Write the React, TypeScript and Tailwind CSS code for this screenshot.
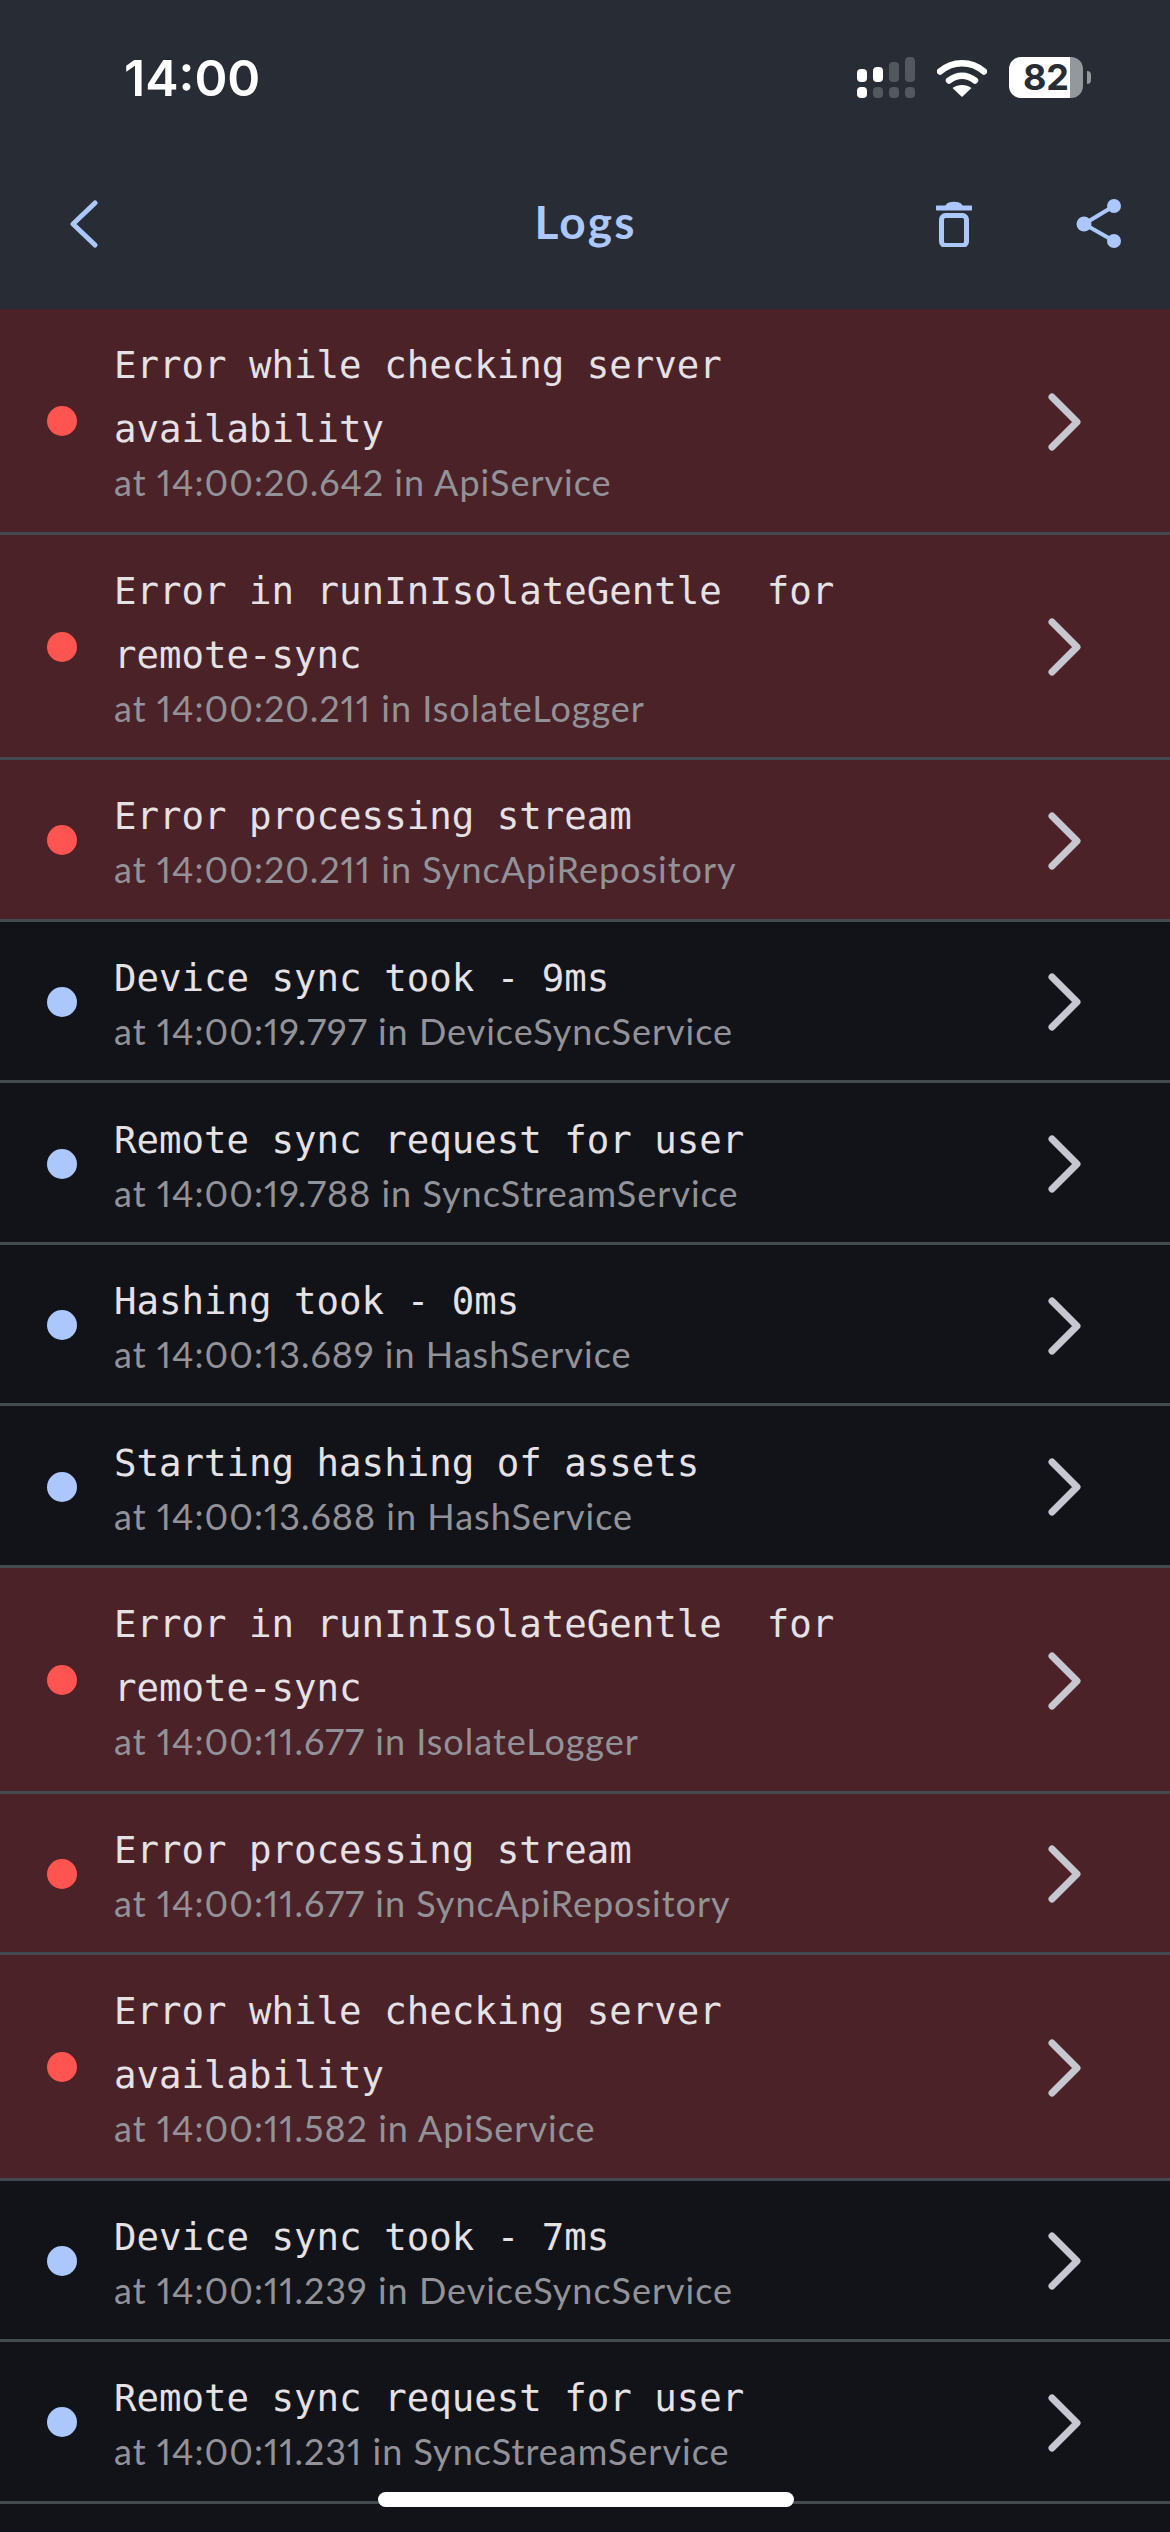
const logs = [
  { error: true, title: ["Error while checking server", "availability"], detail: "at 14:00:20.642 in ApiService" },
  { error: true, title: ["Error in runInIsolateGentle  for", "remote-sync"], detail: "at 14:00:20.211 in IsolateLogger" },
  { error: true, title: ["Error processing stream"], detail: "at 14:00:20.211 in SyncApiRepository" },
  { error: false, title: ["Device sync took - 9ms"], detail: "at 14:00:19.797 in DeviceSyncService" },
  { error: false, title: ["Remote sync request for user"], detail: "at 14:00:19.788 in SyncStreamService" },
  { error: false, title: ["Hashing took - 0ms"], detail: "at 14:00:13.689 in HashService" },
  { error: false, title: ["Starting hashing of assets"], detail: "at 14:00:13.688 in HashService" },
  { error: true, title: ["Error in runInIsolateGentle  for", "remote-sync"], detail: "at 14:00:11.677 in IsolateLogger" },
  { error: true, title: ["Error processing stream"], detail: "at 14:00:11.677 in SyncApiRepository" },
  { error: true, title: ["Error while checking server", "availability"], detail: "at 14:00:11.582 in ApiService" },
  { error: false, title: ["Device sync took - 7ms"], detail: "at 14:00:11.239 in DeviceSyncService" },
  { error: false, title: ["Remote sync request for user"], detail: "at 14:00:11.231 in SyncStreamService" },
];

function StatusIcons() {
  return (
    <div className="flex items-center gap-[22px]">
      {/* dual sim signal */}
      <svg width="58" height="41" viewBox="0 0 58 41" className="shrink-0">
        <rect x="0" y="12" width="10" height="13" rx="4" fill="#fff" />
        <rect x="16" y="10" width="10" height="15" rx="4" fill="#fff" />
        <rect x="32" y="5" width="10" height="20" rx="4" fill="#53585f" />
        <rect x="48" y="0" width="10" height="25" rx="4" fill="#53585f" />
        <rect x="0" y="30" width="10" height="11" rx="4" fill="#fff" />
        <rect x="16" y="30" width="10" height="11" rx="4" fill="#53585f" />
        <rect x="32" y="30" width="10" height="11" rx="4" fill="#53585f" />
        <rect x="48" y="30" width="10" height="11" rx="4" fill="#53585f" />
      </svg>
      {/* wifi */}
      <svg width="50" height="38" viewBox="0 0 50 38" className="shrink-0">
        <path d="M3 12.5C16 1.5 34 1.5 47 12.5" fill="none" stroke="#fff" strokeWidth="6.5" strokeLinecap="round" />
        <path d="M12 21.5C20 15 30 15 38 21.5" fill="none" stroke="#fff" strokeWidth="6.5" strokeLinecap="round" />
        <path d="M25 38L15.5 29C21 25 29 25 34.5 29Z" fill="#fff" />
      </svg>
      {/* battery */}
      <div className="flex items-center gap-[4px]">
        <div className="relative flex h-[41px] w-[74px]">
          <div className="h-full w-[61px] rounded-l-[12px] bg-white" />
          <div className="h-full w-[13px] rounded-r-[12px] bg-[#94979c]" />
          <span className="absolute inset-0 flex items-center justify-center font-['Inter',sans-serif] text-[36px] leading-[41px] font-bold text-[#272c35]">
            82
          </span>
        </div>
        <div className="h-[13px] w-[4px] rounded-r-full bg-[#94979c]" />
      </div>
    </div>
  );
}

export default function App() {
  return (
    <div className="relative h-[2532px] w-[1170px] overflow-hidden bg-[#111318]">
      {/* Header */}
      <div className="h-[309px] bg-[#272c35]">
        <div className="flex h-[179px] items-start justify-between pt-[53px] pr-[79px] pl-[124px]">
          <span className="font-['Inter',sans-serif] text-[50px] leading-[50px] font-semibold text-white">14:00</span>
          <div className="pt-[4px]">
            <StatusIcons />
          </div>
        </div>
        <div className="grid h-[90px] grid-cols-[1fr_auto_1fr] items-center pr-[48px] pl-[49px]">
          <svg width="30" height="48" viewBox="0 0 30 48" fill="none" className="ml-[20px] shrink-0">
            <path d="M26 3L4 24L26 45" stroke="#abc7fb" strokeWidth="5" strokeLinecap="round" strokeLinejoin="round" />
          </svg>
          <span className="-mt-[4px] font-['Lato',sans-serif] text-[46px] leading-none font-bold tracking-[2.2px] text-[#abc7fb]">Logs</span>
          <div className="flex items-center justify-end gap-[104px]">
            <svg width="36" height="46" viewBox="0 0 36 46" fill="none">
              <path d="M1 7H35" stroke="#abc7fb" strokeWidth="5" strokeLinecap="round" />
              <path d="M11 4C13 1 23 1 25 4Z" fill="#abc7fb" stroke="#abc7fb" strokeWidth="2" />
              <rect x="5.5" y="14.5" width="25" height="30" rx="4" stroke="#abc7fb" strokeWidth="5" />
            </svg>
            <svg width="46" height="50" viewBox="0 0 46 50" fill="none">
              <path d="M38 7L8 25L38 42" stroke="#abc7fb" strokeWidth="4" />
              <circle cx="38" cy="7" r="7" fill="#abc7fb" />
              <circle cx="8" cy="25" r="7.5" fill="#abc7fb" />
              <circle cx="38" cy="42" r="7" fill="#abc7fb" />
            </svg>
          </div>
        </div>
      </div>

      {/* Log rows */}
      <div className="flex flex-col">
        {logs.map((log, i) => (
          <div
            key={i}
            className={`flex items-center border-b-[3px] border-[#44484f] py-[26.29px] pr-[88px] pl-[47px] ${
              log.error ? "bg-[#4a2228]" : "bg-[#111318]"
            }`}
          >
            <div className={`mt-[2px] h-[30px] w-[30px] shrink-0 rounded-full ${log.error ? "bg-[#ff5450]" : "bg-[#abc7fb]"}`} />
            <div className="ml-[37px] min-w-0 flex-1">
              <div className="-mt-[2px]">
                {log.title.map((line) => (
                  <div key={line} className="font-['DejaVu_Sans_Mono',monospace] text-[37.4px] leading-[64px] whitespace-pre text-[#e6e1e5]">
                    {line}
                  </div>
                ))}
              </div>
              <div className="mt-[1px] pb-[3px] font-['Lato',sans-serif] text-[36px] leading-[40px] tracking-[1px] text-[#929298] proportional-nums">{log.detail}</div>
            </div>
            <svg width="34" height="58" viewBox="0 0 34 58" fill="none" className="mt-[3px] shrink-0">
              <path d="M4 4L29 29L4 54" stroke="#c6c7d0" strokeWidth="7" strokeLinecap="round" strokeLinejoin="round" />
            </svg>
          </div>
        ))}
      </div>

      {/* Home indicator */}
      <div className="absolute bottom-[25px] left-[378px] h-[15px] w-[416px] rounded-full bg-white" />
    </div>
  );
}
